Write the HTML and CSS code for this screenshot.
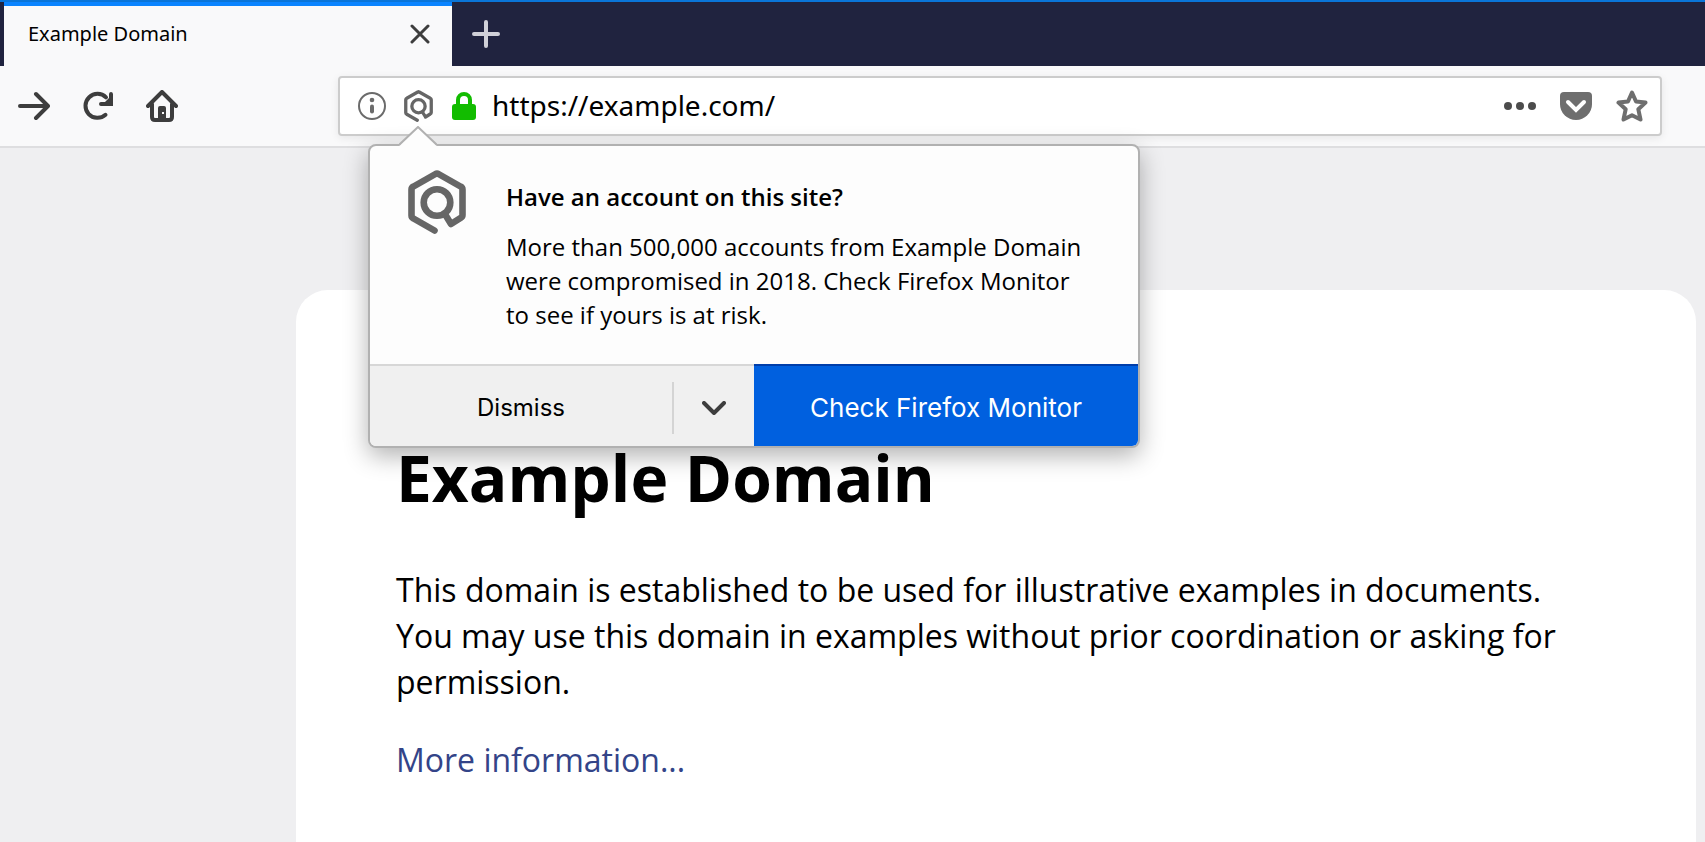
FILE: index.html
```html
<!DOCTYPE html>
<html lang="en">
<head>
    <meta charset="utf-8">
    <title>Example Domain</title>
    <link rel="stylesheet" href="styles.css">
</head>
<body>
    <div class="tabs">
        <div class="tab">
            <span class="tab-title">Example Domain</span>
            <button class="icon-btn tab-close" aria-label="Close tab">
                <svg width="20" height="20" viewBox="0 0 20 20"><path d="M2 2l16 16M18 2L2 18" fill="none" stroke="#3d3d3d" stroke-width="3" stroke-linecap="round"/></svg>
            </button>
        </div>
        <button class="icon-btn new-tab" aria-label="New tab">
            <svg width="28" height="28" viewBox="0 0 28 28"><path d="M14 2v24M2 14h24" fill="none" stroke="#d0d0d8" stroke-width="4" stroke-linecap="round"/></svg>
        </button>
    </div>

    <div class="toolbar">
        <div class="nav">
            <button class="icon-btn" aria-label="Forward">
                <svg width="32" height="32" viewBox="0 0 32 32"><path d="M2 16h27M18 4l12 12-12 12" fill="none" stroke="#3d3d3d" stroke-width="4" stroke-linecap="round" stroke-linejoin="round"/></svg>
            </button>
            <button class="icon-btn" aria-label="Reload">
                <svg width="32" height="32" viewBox="0 0 32 32"><path d="M23.500 24.800A12 12 0 1 1 24 7.400" fill="none" stroke="#3d3d3d" stroke-width="4" stroke-linecap="round"/><path d="M31 4v12H19q-2-.2-2-2t2-2h4l4-4V4q.2-2 2-2t2 2z" fill="#3d3d3d"/></svg>
            </button>
            <button class="icon-btn" aria-label="Home">
                <svg width="32" height="32" viewBox="0 0 32 32"><path d="M2 16L16 2l14 14M6 14v13q0 3 3 3h14q3 0 3-3V14" fill="none" stroke="#3d3d3d" stroke-width="4" stroke-linecap="round" stroke-linejoin="round"/><path fill-rule="evenodd" d="M12 30V18q0-2 2-2h4q2 0 2 2v12zM16 22v2h2v-2z" fill="#3d3d3d"/></svg>
            </button>
        </div>

        <div class="urlbar">
            <button class="icon-btn" aria-label="Site information">
                <svg width="28" height="28" viewBox="0 0 28 28"><circle cx="14" cy="14" r="13" fill="none" stroke="#6b6b6b" stroke-width="2"/><circle cx="14" cy="8" r="2.3" fill="#6b6b6b"/><path d="M14 14.5v5" stroke="#6b6b6b" stroke-width="4" stroke-linecap="round"/></svg>
            </button>
            <div class="monitor">
                <button class="icon-btn" aria-label="Firefox Monitor">
                    <svg width="29" height="32" viewBox="0 0 58 64"><use href="#monitor-logo"/></svg>
                </button>
                <div class="popup" role="dialog" aria-labelledby="popup-title">
                    <svg class="popup-arrow" width="38" height="20" viewBox="0 0 38 20"><path d="M0 20L19 1l19 19z" fill="#fdfdfd"/><path d="M0 19L19 1l19 18" fill="none" stroke="#b1b1b1" stroke-width="2"/></svg>
                    <div class="popup-body">
                        <svg class="popup-logo" width="58" height="64" viewBox="0 0 58 64">
                            <g id="monitor-logo" fill="none" stroke="#666" stroke-width="6.6" stroke-linecap="round" stroke-linejoin="round">
                                <path d="M26.500 60.500L5.500 48.500q-2-1-2-3V19.500q0-2 2-3L27.500 4q1.500-1 3 0L52.500 16.500q2 1 2 3V45q0 2-2 3L43 54l-5.500-9"/>
                                <circle cx="29" cy="32.500" r="13.300"/>
                            </g>
                        </svg>
                        <div class="popup-text">
                            <h2 id="popup-title">Have an account on this site?</h2>
                            <p>More than 500,000 accounts from Example Domain were compromised in 2018. Check Firefox Monitor to see if yours is at risk.</p>
                        </div>
                    </div>
                    <div class="popup-buttons">
                        <button class="dismiss">Dismiss</button>
                        <button class="more" aria-label="More options">
                            <svg width="24" height="14" viewBox="0 0 24 14"><path d="M2 2l10 10L22 2" fill="none" stroke="#3d3d3d" stroke-width="4" stroke-linecap="round" stroke-linejoin="round"/></svg>
                        </button>
                        <button class="check">Check Firefox Monitor</button>
                    </div>
                </div>
            </div>
            <button class="icon-btn" aria-label="Secure connection">
                <svg width="24" height="30" viewBox="0 0 24 30"><path d="M6 14V9a6 6 0 0 1 12 0v5" fill="none" stroke="#12bc00" stroke-width="4"/><rect y="13" width="24" height="16" rx="3" fill="#12bc00"/></svg>
            </button>
            <input class="url" type="text" value="https://example.com/" aria-label="Address">
            <div class="page-actions">
                <button class="icon-btn" aria-label="Page actions">
                    <svg width="32" height="8" viewBox="0 0 32 8"><g fill="#4c4c4c"><circle cx="4" cy="4" r="4"/><circle cx="16" cy="4" r="4"/><circle cx="28" cy="4" r="4"/></g></svg>
                </button>
                <button class="icon-btn" aria-label="Save to Pocket">
                    <svg width="32" height="28" viewBox="0 0 32 28"><path d="M4 0h24q4 0 4 4v8a16 16 0 0 1-32 0V4q0-4 4-4z" fill="#6e6e6e"/><path d="M8 10l8 8 8-8" fill="none" stroke="#fff" stroke-width="4" stroke-linecap="round"/></svg>
                </button>
                <button class="icon-btn" aria-label="Bookmark">
                    <svg width="32" height="32" viewBox="0 0 32 32"><path d="M16 2.500l4 9 9.500 1.100-7.200 6.600 2.200 10.300L16 25.200l-8.500 4.300 2.200-10.300-7.200-6.600 9.500-1.100z" fill="none" stroke="#6e6e6e" stroke-width="4" stroke-linejoin="round"/></svg>
                </button>
            </div>
        </div>
    </div>

    <main class="page">
        <div class="card">
            <h1>Example Domain</h1>
            <p>This domain is established to be used for illustrative examples in documents. You may use this domain in examples without prior coordination or asking for permission.</p>
            <p><a href="#">More information...</a></p>
        </div>
    </main>
</body>
</html>
```
FILE: styles.css
```css
* {
    box-sizing: border-box;
}
body {
    margin: 0;
    min-height: 100vh;
    display: flex;
    flex-direction: column;
    overflow: hidden;
    background-color: #efeff1;
    font-family: "Open Sans", sans-serif;
    color: #000;
}
button {
    border: 0;
    padding: 0;
    background: none;
    cursor: pointer;
}
svg {
    display: block;
}
.icon-btn {
    display: flex;
    align-items: center;
    justify-content: center;
}

/* tabs */
.tabs {
    display: flex;
    height: 66px;
    padding-left: 4px;
    border-top: 2px solid #0a75d8;
    background-color: #20233f;
}
.tab {
    display: flex;
    align-items: center;
    justify-content: space-between;
    width: 448px;
    padding: 0 22px 4px 24px;
    border-top: 4px solid #0a84ff;
    background-color: #f9f9fa;
}
.tab-title {
    font-family: "Noto Sans", sans-serif;
    font-size: 20px;
    line-height: 28px;
}
.new-tab {
    width: 68px;
}

/* toolbar */
.toolbar {
    display: flex;
    align-items: flex-start;
    padding: 10px 43px 10px 2px;
    border-bottom: 2px solid #dedee0;
    background-color: #f9f9fa;
}
.nav {
    display: flex;
    margin-right: 144px;
}
.nav .icon-btn {
    width: 64px;
    height: 60px;
}
.urlbar {
    flex: 1;
    display: flex;
    height: 60px;
    padding-left: 9px;
    border: 2px solid #ccc;
    border-radius: 4px;
    background-color: #fff;
    box-shadow: 0 2px 8px rgba(0, 0, 0, 0.08);
}
.urlbar .icon-btn {
    width: 46px;
    height: 56px;
}
.url {
    flex: 1;
    min-width: 0;
    padding: 0 0 2px 5px;
    border: 0;
    outline: 0;
    background: none;
    font-family: "Noto Sans", sans-serif;
    font-size: 28px;
}
.page-actions {
    display: flex;
}
.page-actions .icon-btn {
    width: 56px;
}

/* monitor popup */
.monitor {
    position: relative;
}
.popup {
    position: absolute;
    z-index: 1;
    top: 66px;
    left: -27px;
    width: 772px;
    border: 2px solid #b1b1b1;
    border-radius: 8px;
    background-color: #fdfdfd;
    box-shadow: 0 8px 24px rgba(0, 0, 0, 0.3);
}
.popup-arrow {
    position: absolute;
    top: -20px;
    left: 29px;
}
.popup-body {
    display: flex;
    gap: 40px;
    padding: 24px 40px 32px 38px;
}
.popup-text {
    flex: 1;
    padding-top: 10px;
    font-size: 24px;
    line-height: 34px;
}
.popup-text h2 {
    margin: 0 0 16px;
    font-size: 24px;
    font-weight: 600;
}
.popup-text p {
    margin: 0;
}
.popup-buttons {
    display: flex;
    height: 82px;
    border-top: 2px solid #d7d7d7;
    border-radius: 0 0 6px 6px;
    background-color: #f0f0f0;
    font-family: Inter, sans-serif;
}
.popup-buttons button {
    font-family: inherit;
    font-size: 24px;
}
.dismiss {
    flex: 1;
    padding-top: 2px;
}
.more {
    display: flex;
    align-items: center;
    justify-content: center;
    width: 82px;
    margin: 16px 0 12px;
    border-left: 2px solid #d4d4d4;
}
.popup-buttons .check {
    width: 384px;
    margin-top: -2px;
    padding-top: 2px;
    border-top: 2px solid #003eaa;
    border-radius: 0 0 6px 0;
    background-color: #0060df;
    color: #fff;
    font-size: 26px;
}

/* page */
.page {
    flex: 1;
    display: flex;
    padding: 142px 9px 0 296px;
}
.card {
    flex: 1;
    padding: 144px 100px 0;
    border-radius: 32px 32px 0 0;
    background-color: #fff;
    font-size: 32px;
    line-height: 46px;
}
.card h1 {
    margin: 0 0 45px;
    font-size: 64px;
    line-height: 88px;
}
.card p {
    margin: 0 0 32px;
}
.card a {
    color: #334488;
    text-decoration: none;
}
```
